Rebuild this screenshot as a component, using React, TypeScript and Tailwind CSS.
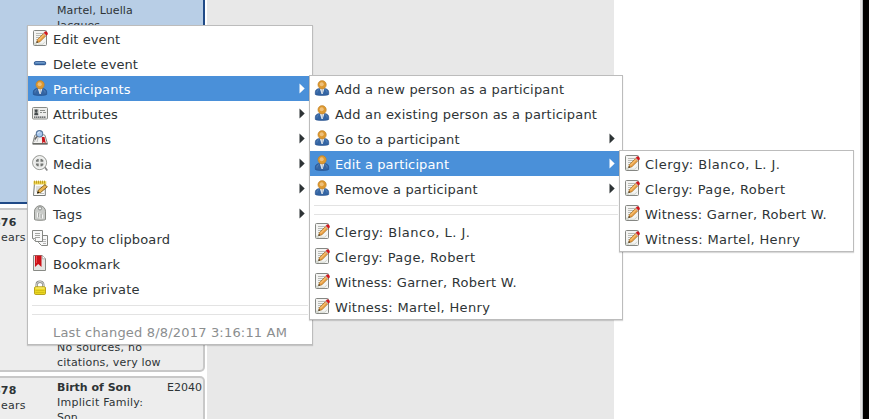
import type { ReactNode } from 'react';

type IconName =
  | 'edit' | 'minus' | 'person' | 'attributes' | 'citations' | 'media'
  | 'notes' | 'tags' | 'copy' | 'bookmark' | 'lock' | 'none';

const drawings: Record<IconName, ReactNode> = {
  none: null,
  edit: (
    <g>
      <rect x="1.5" y=".5" width="13" height="15" rx="1" fill="#f4f4f2" stroke="#858783" />
      <path d="M4 3.5h7M4 5.5h6M4 7.5h5M4 9.5h3" stroke="#b9bbb7" />
      <path d="M2 12.5h2.2l1.3 2.5H2Z" fill="#d3d7cf" />
      <path d="M6 14.2h5l2-2.5" fill="none" stroke="#d3d7cf" />
      <path d="m4.6 12.6.9-3 6.3-6.4 2.4 2.3-6.4 6.4Z" fill="#eda247" stroke="#94600f" strokeWidth=".6" />
      <path d="m6.4 10.2 5.8-5.8" stroke="#fbd491" strokeWidth=".9" />
      <path d="m11.6 3.2 1.4-1.4c1-.9 3.3 1.1 2.4 2.4L14 5.6Z" fill="#d8161e" stroke="#a40000" strokeWidth=".4" />
      <path d="m11.2 3.6.7-.7 2.4 2.3-.7.7Z" fill="#c9ccc8" />
      <path d="m4.4 12.9.5-1.8 1.4 1.2Z" fill="#2b2b2b" />
    </g>
  ),
  minus: (
    <g>
      <rect x="2.4" y="6.7" width="11.2" height="3" rx="1" fill="#4f80b8" stroke="#204a87" />
      <path d="M3.5 7.6h9" stroke="#85aad3" strokeWidth=".8" />
    </g>
  ),
  person: (
    <g>
      <path d="M1.3 14.4V12c0-2.3 2.2-3.5 4.5-3.5h4.4c2.3 0 4.5 1.2 4.5 3.5v2.4c-.8 1.3-12.6 1.3-13.4 0Z" fill="#3465a4" stroke="#204a87" strokeWidth=".6" />
      <path d="M3 12.5V12c0-1 .8-2 2-2.4M13 12.5V12c0-1-.8-2-2-2.4" fill="none" stroke="#6590c2" strokeWidth=".7" />
      <path d="M5.8 8.6h4.6L8.7 14H7.6Z" fill="#eef2f5" />
      <path d="m7.6 9.4.5-.4.7.4-.2 3.8h-.8Z" fill="#a7b4c6" />
      <circle cx="8.1" cy="4.8" r="4.2" fill="#dd9931" stroke="#b87a22" strokeWidth=".5" />
      <circle cx="7.7" cy="4.2" r="2" fill="#efc07a" />
    </g>
  ),
  attributes: (
    <g>
      <rect x=".5" y="2.5" width="15" height="11.5" rx="1" fill="#eeeeec" stroke="#888a85" />
      <rect x="2" y="4" width="4.5" height="6" fill="#b4b7b3" />
      <circle cx="4.2" cy="5.8" r="1.4" fill="#44494b" />
      <path d="M2.3 10.2c0-4 3.9-4 3.9 0Z" fill="#44494b" />
      <path d="M8 5.5h5M8 7.5h2M11 7.5h3" stroke="#8a8d89" />
      <path d="M2 12.2h12" stroke="#44494b" strokeWidth="1.3" strokeDasharray="1.5 .5" />
    </g>
  ),
  citations: (
    <g>
      <path d="M.7 13.5 2.8 5.2c2-1 4-.8 5.2.6 1.2-1.4 3.2-1.5 5-.5l2.4 8.2Z" fill="#f3f3f1" stroke="#858783" />
      <path d="M.6 14h15" stroke="#555753" strokeWidth="1.2" />
      <path d="M2.5 12 4 6.5M5 12l1-4" stroke="#c0c0c0" />
      <path d="M9.8 7h2.7l1.3 6.5-2-1.4-1.5 1.4Z" fill="#c9151b" />
      <circle cx="7.5" cy="3.8" r="3.2" fill="#a9c8ed" stroke="#5a799f" strokeWidth="1.1" />
      <path d="M5.8 3.5a2 2 0 0 1 2-1.6" stroke="#edf6ff" fill="none" />
      <path d="M5.4 6.2 2.6 9.4" stroke="#666" strokeWidth="1.5" />
    </g>
  ),
  media: (
    <g>
      <path d="m12.8 12.3 2.5 3.2" stroke="#888" strokeWidth="1.7" />
      <circle cx="7.6" cy="7.6" r="7" fill="#e6e7e5" stroke="#888a85" strokeWidth=".9" />
      <circle cx="7.6" cy="7.6" r="5.8" fill="none" stroke="#fafafa" strokeWidth=".8" />
      <g fill="#747774">
        <path d="M4 6.8V5.3L5.5 4h1.2v2.8ZM8.5 6.8V4h1.3l1.5 1.3v1.5ZM4 8.5h2.7v2.8H5.5L4 10ZM8.5 8.5h2.8V10l-1.5 1.3H8.5Z" />
      </g>
    </g>
  ),
  notes: (
    <g>
      <path d="M2.5 3h10.8v12.5H1.5Z" fill="#fafafa" stroke="#777b78" />
      <path d="M1.5 1.2h12.8v3.3H1.5Z" fill="#edd455" />
      <path d="M2.5.6v3M4.5.6v3M6.5.6v3M8.5.6v3M10.5.6v3M12.5.6v3" stroke="#b8930f" strokeWidth=".8" />
      <path d="M4 7h6M4 9h4M4 11h2M8 13.5h4" stroke="#c0c2be" />
      <path d="m5.4 13.2 1-3.2 6.6-5.4 2.3 2.3-6.7 5.6Z" fill="#e9b451" stroke="#755006" strokeWidth=".8" />
      <path d="m5.1 13.5.8-2.2 1.6 1.5Z" fill="#111" />
    </g>
  ),
  tags: (
    <g>
      <path d="M2.5 14.5V6.2C2.5 3.5 5 .7 8 .7s5.5 2.8 5.5 5.5v8.3c0 1-11 1-11 0Z" fill="#c9cbc8" stroke="#888a85" />
      <circle cx="8" cy="3.4" r="1.6" fill="#f5f5f5" stroke="#777b78" strokeWidth=".8" />
      <path d="M5.5 7.5v5M8 8.5v5M10.5 9.5v4" stroke="#f5f5f5" />
      <path d="M6.5 8v4M9 9v4" stroke="#979995" strokeWidth=".7" />
    </g>
  ),
  copy: (
    <g fill="#f8f8f8" stroke="#858783">
      <path d="M6.5 5.5h9v10h-6l-3-3Z" />
      <path d="M11 9.5h3M10 11.5h4M11 13.5h3" stroke="#b5b5b5" />
      <path d="M.5.5h10v11h-7l-3-3Z" />
      <path d="M3 3.5h5M3 5.5h5M3 7.5h5" stroke="#a5a7a3" />
      <path d="M.7 8.5h2.8v2.8" strokeWidth=".8" />
    </g>
  ),
  bookmark: (
    <g>
      <path d="M1.5.5h8.8l3.2 3.3v11.7h-12Z" fill="#e5e6e4" stroke="#888a85" />
      <path d="M10.3.5v3.3h3.2" fill="#fff" stroke="#999b97" strokeWidth=".7" />
      <path d="M3 .5h6.5V12L6.2 8.9 3 12Z" fill="#cc1118" />
      <path d="M4.5 1v7" stroke="#ed5a5e" strokeWidth=".8" />
    </g>
  ),
  lock: (
    <g>
      <path d="M4.7 8V4.7c0-4 6.6-4 6.6 0V8" fill="none" stroke="#858783" strokeWidth="2.4" />
      <path d="M4.7 8V4.7c0-4 6.6-4 6.6 0V8" fill="none" stroke="#eeeeec" strokeWidth=".9" />
      <rect x="2.5" y="6.8" width="11" height="7.7" rx="1.2" fill="#ebd724" stroke="#a99100" strokeWidth=".8" />
      <path d="M3.5 8h9" stroke="#fff387" />
      <path d="M3.5 10.5h9M3.5 12.5h9" stroke="#d5c015" />
    </g>
  ),
};

interface Item {
  icon: IconName;
  label: string;
  spacing?: string;
  arrow?: boolean;
  active?: boolean;
  muted?: boolean;
}

function Row({ icon, label, spacing = 'tracking-[0.18px]', arrow, active, muted }: Item) {
  const tone = active ? 'bg-[#4a90d9] text-white' : muted ? 'text-[#8b8e8f]' : 'text-[#2e3436]';
  return (
    <div className={`flex h-[25px] items-start pl-1 pr-[7px] ${tone}`}>
      <svg viewBox="0 0 16 16" className="mr-[5px] mt-1 h-4 w-4 shrink-0">{drawings[icon]}</svg>
      <span className={`whitespace-nowrap pt-px text-[13px] leading-[25px] ${spacing}`}>{label}</span>
      {arrow && (
        <svg viewBox="0 0 6 11" className="ml-auto mt-[7px] h-[11px] w-[6px]">
          <path d="M.5 .5 5.7 5.5.5 10.5Z" fill="currentColor" />
        </svg>
      )}
    </div>
  );
}

const Separator = () => (
  <div className="flex h-[18px] flex-col gap-2 px-1 pt-1">
    <div className="h-px bg-[#e3e3e3]" />
    <div className="h-px bg-[#e3e3e3]" />
  </div>
);

const people: Item[] = [
  { icon: 'edit', label: 'Clergy: Blanco, L. J.', spacing: 'tracking-[0.5px]' },
  { icon: 'edit', label: 'Clergy: Page, Robert', spacing: 'tracking-[0.42px]' },
  { icon: 'edit', label: 'Witness: Garner, Robert W.', spacing: 'tracking-[0.25px]' },
  { icon: 'edit', label: 'Witness: Martel, Henry', spacing: 'tracking-[0.32px]' },
];

const eventItems: Item[] = [
  { icon: 'edit', label: 'Edit event', spacing: 'tracking-[0.08px]' },
  { icon: 'minus', label: 'Delete event', spacing: 'tracking-[0.1px]' },
  { icon: 'person', label: 'Participants', spacing: 'tracking-[0.1px]', arrow: true, active: true },
  { icon: 'attributes', label: 'Attributes', spacing: 'tracking-[0.08px]', arrow: true },
  { icon: 'citations', label: 'Citations', spacing: 'tracking-[0.06px]', arrow: true },
  { icon: 'media', label: 'Media', spacing: 'tracking-[0px]', arrow: true },
  { icon: 'notes', label: 'Notes', spacing: 'tracking-[0.05px]', arrow: true },
  { icon: 'tags', label: 'Tags', spacing: 'tracking-[0.05px]', arrow: true },
  { icon: 'copy', label: 'Copy to clipboard', spacing: 'tracking-[0.16px]' },
  { icon: 'bookmark', label: 'Bookmark', spacing: 'tracking-[0.15px]' },
  { icon: 'lock', label: 'Make private', spacing: 'tracking-[0.2px]' },
];

const participantItems: Item[] = [
  { icon: 'person', label: 'Add a new person as a participant', spacing: 'tracking-[0.2px]' },
  { icon: 'person', label: 'Add an existing person as a participant' },
  { icon: 'person', label: 'Go to a participant', spacing: 'tracking-[0.14px]', arrow: true },
  { icon: 'person', label: 'Edit a participant', spacing: 'tracking-[0.12px]', arrow: true, active: true },
  { icon: 'person', label: 'Remove a participant', spacing: 'tracking-[0.16px]', arrow: true },
];

function Menu({ place, children }: { place: string; children: ReactNode }) {
  return (
    <div className={`absolute border border-[#bcbcbc] bg-white shadow-[0_1px_1px_rgba(0,0,0,0.15)] ${place}`}>
      {children}
    </div>
  );
}

function Age({ year }: { year: string }) {
  return (
    <div className="w-[57px] shrink-0 pt-[5px]">
      <p className="-ml-[7px] font-bold tracking-[0.2px]">{year}</p>
      <p className="ml-px tracking-[0.25px]">ears</p>
    </div>
  );
}

export default function App() {
  return (
    <div className="relative flex h-[419px] w-[869px] overflow-hidden bg-white font-['DejaVu_Sans',sans-serif] text-[#2e3436]">
      <div className="flex w-[207px] shrink-0 flex-col gap-1 text-[11px] leading-[15px]">
        <div className="h-[204px] w-[205px] shrink-0 border-b-2 border-r-2 border-[#204a87] bg-[#b8cee6] pl-[57px] pt-[3px] tracking-[0.1px]">
          <p>Martel, Luella</p>
          <p>Jacques</p>
        </div>
        <div className="flex h-[164px] w-[205px] shrink-0 rounded-r-[5px] border-2 border-l-0 border-[#c8c8c8] bg-[#ededed]">
          <Age year="876" />
          <div className="flex flex-col justify-end whitespace-nowrap">
            <p className="tracking-[0.27px]">No sources, no</p>
            <p className="tracking-[0.17px]">citations, very low</p>
          </div>
        </div>
        <div className="flex h-[80px] w-[205px] shrink-0 rounded-r-[5px] border-2 border-l-0 border-[#c8c8c8] bg-[#ededed]">
          <Age year="878" />
          <div className="grow whitespace-nowrap pt-[2px]">
            <div className="flex justify-between pr-[1px]">
              <span className="font-bold">Birth of Son</span>
              <span>E2040</span>
            </div>
            <p className="tracking-[0.25px]">Implicit Family:</p>
            <p>Son</p>
          </div>
        </div>
      </div>
      <div className="w-[407px] bg-[#e8e8e8]" />
      <div className="w-[246px] bg-white" />
      <div className="w-[2px] bg-[#e4e4e4]" />
      <div className="w-px bg-[#b4b8bb]" />
      <div className="grow bg-black" />

      <Menu place="left-[27px] top-[25px] h-[320px] w-[286px]">
        {eventItems.map((item) => <Row key={item.label} {...item} />)}
        <Separator />
        <Row icon="none" label="Last changed 8/8/2017 3:16:11 AM" muted />
      </Menu>
      <Menu place="left-[309px] top-[75px] h-[245px] w-[314px]">
        {participantItems.map((item) => <Row key={item.label} {...item} />)}
        <Separator />
        {people.map((item) => <Row key={item.label} {...item} />)}
      </Menu>
      <Menu place="left-[619px] top-[150px] h-[102px] w-[235px]">
        {people.map((item) => <Row key={item.label} {...item} />)}
      </Menu>
    </div>
  );
}
